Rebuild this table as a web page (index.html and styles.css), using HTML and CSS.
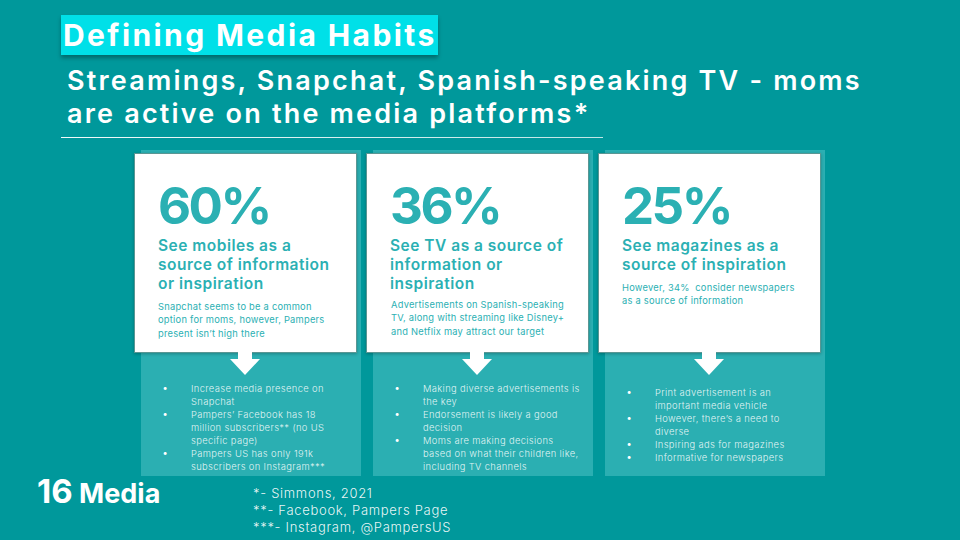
FILE: index.html
```html
<!DOCTYPE html>
<html lang="en">
<head>
<meta charset="utf-8">
<title>Defining Media Habits</title>
<link rel="stylesheet" href="styles.css">
</head>
<body>
<div class="slide">
  <header class="head-block">
    <h1 class="title">Defining Media Habits</h1>
    <h2 class="subtitle">Streamings, Snapchat, Spanish-speaking TV - moms<br>are active on the media platforms*</h2>
    <div class="rule"></div>
  </header>

  <section class="columns">
    <div class="col">
      <div class="card">
        <div class="pct">60%</div>
        <div class="lead">See mobiles as a<br>source of information<br>or inspiration</div>
        <p class="note">Snapchat seems to be a common<br>option for moms, however, Pampers<br>present isn’t high there</p>
      </div>
      <svg class="arrow" width="30" height="24" viewBox="0 0 30 24"><polygon points="8,0 22,0 22,7 30,7 15,23 0,7 8,7" fill="#fff"/></svg>
      <ul class="points">
        <li>Increase media presence on<br>Snapchat</li>
        <li>Pampers’ Facebook has 18<br>million subscribers** (no US<br>specific page)</li>
        <li>Pampers US has only 191k<br>subscribers on Instagram***</li>
      </ul>
    </div>

    <div class="col">
      <div class="card">
        <div class="pct">36%</div>
        <div class="lead">See TV as a source of<br>information or<br>inspiration</div>
        <p class="note note-tight">Advertisements on Spanish-speaking<br>TV, along with streaming like Disney+<br>and Netflix may attract our target</p>
      </div>
      <svg class="arrow" width="30" height="24" viewBox="0 0 30 24"><polygon points="8,0 22,0 22,7 30,7 15,23 0,7 8,7" fill="#fff"/></svg>
      <ul class="points">
        <li>Making diverse advertisements is<br>the key</li>
        <li>Endorsement is likely a good<br>decision</li>
        <li>Moms are making decisions<br>based on what their children like,<br>including TV channels</li>
      </ul>
    </div>

    <div class="col">
      <div class="card">
        <div class="pct">25%</div>
        <div class="lead">See magazines as a<br>source of inspiration</div>
        <p class="note">However, 34%&nbsp; consider newspapers<br>as a source of information</p>
      </div>
      <svg class="arrow" width="30" height="24" viewBox="0 0 30 24"><polygon points="8,0 22,0 22,7 30,7 15,23 0,7 8,7" fill="#fff"/></svg>
      <ul class="points points-low">
        <li>Print advertisement is an<br>important media vehicle</li>
        <li>However, there’s a need to<br>diverse</li>
        <li>Inspiring ads for magazines</li>
        <li>Informative for newspapers</li>
      </ul>
    </div>
  </section>

  <footer class="foot">
    <div class="section-name"><span class="num">16</span> Media</div>
    <div class="sources">
      <div>*- Simmons, 2021</div>
      <div>**- Facebook, Pampers Page</div>
      <div>***- Instagram, @PampersUS</div>
    </div>
  </footer>
</div>
</body>
</html>
```

FILE: styles.css
```css
html, body {
  margin: 0;
  padding: 0;
}

body {
  background: #00989b;
  font-family: "Inter", "Noto Sans", sans-serif;
}

.slide {
  width: 960px;
  height: 540px;
  background: #00989b;
  overflow: hidden;
  display: flex;
  flex-direction: column;
}

.head-block {
  padding: 15px 0 0 61px;
}

.title {
  display: inline-block;
  margin: 0;
  padding: 0 1px 0 2px;
  background: #00e0e8;
  color: #fff;
  font-size: 30px;
  font-weight: 700;
  line-height: 40px;
  letter-spacing: 2.4px;
  box-shadow: 0 3px 4px rgba(0, 0, 0, 0.3);
}

.subtitle {
  margin: 9px 0 0 6px;
  color: #fff;
  font-size: 27px;
  font-weight: 600;
  line-height: 33px;
  letter-spacing: 2.2px;
}

.rule {
  margin-top: 7px;
  width: 542px;
  height: 1px;
  background: linear-gradient(90deg, rgba(255,255,255,0.95), rgba(255,255,255,0.75));
}

.columns {
  display: flex;
  gap: 12px;
  margin: 12px 0 0 141px;
}

.col {
  width: 220px;
  height: 326px;
  background: #2bafb2;
  display: flex;
  flex-direction: column;
}

.card {
  box-sizing: border-box;
  width: 223px;
  height: 200px;
  margin: 3px 0 0 -7px;
  padding: 26px 10px 0 23px;
  background: #fff;
  border: 1px solid #5a9693;
  box-shadow: 0 1px 3px rgba(0, 0, 0, 0.25);
  color: #2bb0b3;
}

.pct {
  font-size: 51px;
  font-weight: 700;
  line-height: 52px;
  letter-spacing: -2.5px;
}

.lead {
  margin-top: 4px;
  font-size: 15.5px;
  font-weight: 600;
  line-height: 19px;
  letter-spacing: 0.5px;
  white-space: nowrap;
}

.note {
  margin: 7px 0 0;
  font-size: 9.3px;
  font-weight: 400;
  line-height: 13.3px;
  letter-spacing: 0.25px;
  white-space: nowrap;
}

.note-tight {
  margin-top: 5px;
  margin-left: 1px;
}

.arrow {
  display: block;
  margin: -1px 0 0 89px;
}

.points {
  list-style: none;
  margin: 6px 0 0;
  padding: 0 0 0 21px;
  color: rgba(255, 255, 255, 0.88);
  font-size: 9.4px;
  font-weight: 300;
  line-height: 13px;
  letter-spacing: 0.35px;
  white-space: nowrap;
}

.points li {
  display: grid;
  grid-template-columns: 29px auto;
}

.points li::before {
  content: "•";
  font-size: 11px;
  color: #fff;
}

.points-low {
  margin-top: 10px;
}

.foot {
  display: flex;
  align-items: flex-start;
  padding: 0 0 0 37px;
}

.section-name {
  width: 216px;
  margin-top: -2px;
  color: #fff;
  font-size: 27px;
  font-weight: 700;
  line-height: 34px;
}

.num {
  font-size: 33px;
}

.sources {
  margin-top: 9px;
  color: rgba(255, 255, 255, 0.92);
  font-size: 13px;
  font-weight: 300;
  line-height: 17px;
  letter-spacing: 0.7px;
}
```
